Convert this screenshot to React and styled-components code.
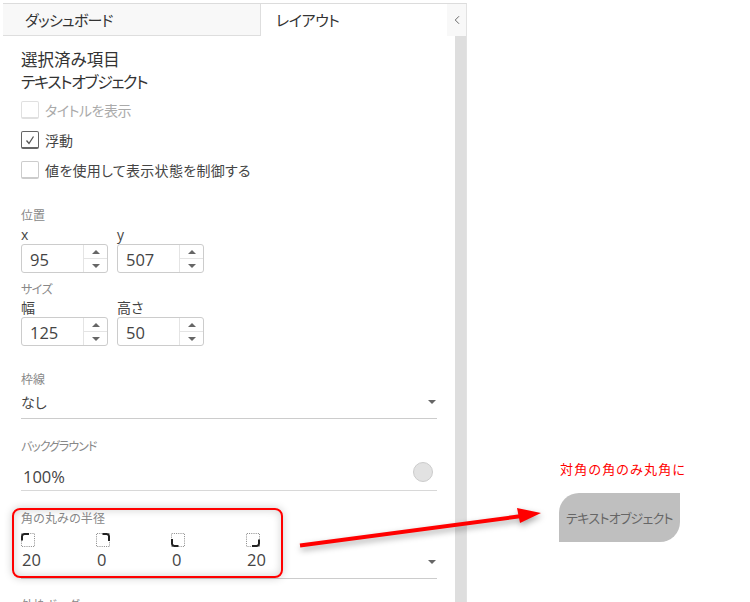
import React from 'react';
import styled, {createGlobalStyle} from 'styled-components';
import {ChevronLeft} from 'lucide-react';

const GlobalStyle = createGlobalStyle`
  html, body {
    margin: 0;
    padding: 0;
    background: #fff;
  }

  body {
    font-family: "Open Sans", "Noto Sans CJK JP", sans-serif;
    font-feature-settings: "palt";
    color: #404040;
  }
`;

const CORNERS = [
    {turn: 0, value: 20},
    {turn: 90, value: 0},
    {turn: 270, value: 0},
    {turn: 180, value: 20},
];

const CheckMark = () => (
    <svg width="12" height="12" viewBox="0 0 12 12">
        <path d="M2.5 6.5 L5 9.5 L9.5 2.5" fill="none" stroke="#555" strokeWidth="1.3"/>
    </svg>
)

const CornerIcon = ({turn}) => (
    <CornerSvg $turn={turn} viewBox="0 0 14 14">
        <rect x="0.5" y="0.5" width="13" height="13" fill="none" stroke="#888" strokeDasharray="1 1.2"/>
        <path d="M1 7.5V3.5a2.5 2.5 0 0 1 2.5-2.5H8" fill="none" stroke="#222" strokeWidth="2"/>
    </CornerSvg>
)

const Spinner = ({label, value}) => (
    <SpinnerField>
        <SpinnerLabel>{label}</SpinnerLabel>
        <SpinnerBox>
            <SpinnerValue>{value}</SpinnerValue>
            <SpinnerButtons>
                <SpinnerButton><Caret $up/></SpinnerButton>
                <SpinnerButton><Caret/></SpinnerButton>
            </SpinnerButtons>
        </SpinnerBox>
    </SpinnerField>
)

const App = () => {
    return (
        <Page>
            <GlobalStyle/>
            <Panel>
                <Tabs>
                    <Tab>ダッシュボード</Tab>
                    <Tab $active>レイアウト</Tab>
                    <Collapse><ChevronLeft size={14} strokeWidth={1.5}/></Collapse>
                </Tabs>
                <Body>
                    <Form>
                        <Title>選択済み項目</Title>
                        <Title $kana>テキストオブジェクト</Title>
                        <CheckList>
                            <CheckRow $disabled $spacing={-0.5}>
                                <CheckBox $disabled/>
                                タイトルを表示
                            </CheckRow>
                            <CheckRow>
                                <CheckBox $checked><CheckMark/></CheckBox>
                                浮動
                            </CheckRow>
                            <CheckRow $spacing={0.3}>
                                <CheckBox/>
                                値を使用して表示状態を制御する
                            </CheckRow>
                        </CheckList>

                        <FieldLabel $top={23}>位置</FieldLabel>
                        <SpinnerRow>
                            <Spinner label="x" value="95"/>
                            <Spinner label="y" value="507"/>
                        </SpinnerRow>
                        <FieldLabel $top={9} $spacing={-0.5}>サイズ</FieldLabel>
                        <SpinnerRow $top={1}>
                            <Spinner label="幅" value="125"/>
                            <Spinner label="高さ" value="50"/>
                        </SpinnerRow>

                        <FieldLabel $top={26}>枠線</FieldLabel>
                        <SelectRow>
                            なし
                            <Caret/>
                        </SelectRow>

                        <FieldLabel $top={20} $spacing={-1}>バックグラウンド</FieldLabel>
                        <OpacityRow>
                            <OpacityValue>100%</OpacityValue>
                            <Swatch/>
                        </OpacityRow>

                        <FieldLabel $top={20} $spacing={0.2}>角の丸みの半径</FieldLabel>
                        <RadiusRow>
                            {CORNERS.map((corner) => (
                                <RadiusColumn key={corner.turn}>
                                    <CornerIcon turn={corner.turn}/>
                                    <RadiusValue>{corner.value}</RadiusValue>
                                </RadiusColumn>
                            ))}
                            <RadiusCaret><Caret/></RadiusCaret>
                        </RadiusRow>

                        <FieldLabel $top={19}>外枠ボーダー</FieldLabel>
                    </Form>
                    <Scrollbar/>
                </Body>
            </Panel>

            <Preview>
                <Note>対角の角のみ丸角に</Note>
                <TextObject>テキストオブジェクト</TextObject>
            </Preview>

            <Highlight/>
            <Arrow viewBox="0 0 750 602">
                <line x1="300" y1="545.5" x2="522" y2="516" stroke="#f00" strokeWidth="4"/>
                <polygon points="541,513 517,508 520,523" fill="#f00"/>
            </Arrow>
        </Page>
    )
}

const Page = styled.div`
  position: relative;
  display: flex;
  width: 750px;
  height: 602px;
  overflow: hidden;
`;

const Panel = styled.div`
  display: flex;
  flex-direction: column;
  flex: none;
  width: 464px;
  height: 599px;
  margin: 3px 0 0 3px;
  border-top: 1px solid #dcdcdc;
  border-right: 1px solid #e2e2e2;
  box-sizing: border-box;
`;

const Tabs = styled.div`
  display: flex;
  flex: none;
  height: 32px;
`;

const Tab = styled.div`
  flex: none;
  width: ${({$active}) => ($active ? '186px' : '258px')};
  box-sizing: border-box;
  padding-left: ${({$active}) => ($active ? '15px' : '22px')};
  font-size: 15px;
  line-height: 32px;
  letter-spacing: ${({$active}) => ($active ? '-0.4px' : '-0.8px')};
  color: #333;
  background: ${({$active}) => ($active ? '#fff' : '#f8f8f8')};
  border-bottom: ${({$active}) => ($active ? 'none' : '1px solid #dedede')};
  border-right: ${({$active}) => ($active ? 'none' : '1px solid #dedede')};
`;

const Collapse = styled.div`
  display: flex;
  flex: 1;
  align-items: center;
  justify-content: center;
  color: #555;
  background: #f8f8f8;
`;

const Body = styled.div`
  display: flex;
  flex: 1;
  min-height: 0;
`;

const Form = styled.div`
  flex: 1;
  overflow: hidden;
  padding: 13px 18px 0;
`;

const Scrollbar = styled.div`
  flex: none;
  width: 11px;
  background: #dedede;
`;

const Title = styled.div`
  font-size: ${({$kana}) => ($kana ? '16px' : '16.5px')};
  line-height: 22px;
  letter-spacing: ${({$kana}) => ($kana ? '-1.4px' : '0')};
  color: #333;
`;

const CheckList = styled.div`
  margin-top: 2px;
`;

const CheckRow = styled.div`
  display: flex;
  align-items: center;
  gap: 6px;
  height: 30px;
  font-size: 14px;
  letter-spacing: ${({$spacing}) => $spacing || 0}px;
  color: ${({$disabled}) => ($disabled ? '#aaa' : '#444')};
`;

const CheckBox = styled.span`
  display: flex;
  align-items: center;
  justify-content: center;
  flex: none;
  width: 18px;
  height: 18px;
  box-sizing: border-box;
  border: 1px solid ${({$checked, $disabled}) => ($checked ? '#666' : $disabled ? '#e0e0e0' : '#ccc')};
  border-bottom-width: 2px;
  border-radius: 2px;
`;

const FieldLabel = styled.div`
  margin-top: ${({$top}) => $top}px;
  font-size: 12px;
  line-height: 16px;
  letter-spacing: ${({$spacing}) => $spacing || 0}px;
  color: #888;
`;

const SpinnerRow = styled.div`
  display: flex;
  gap: 9px;
  margin-top: ${({$top}) => $top || 2}px;
`;

const SpinnerField = styled.div`
  width: 87px;
`;

const SpinnerLabel = styled.div`
  font-size: 14px;
  line-height: 18px;
  color: #444;
`;

const SpinnerBox = styled.div`
  display: flex;
  height: 29px;
  box-sizing: border-box;
  border: 1px solid #ccc;
  border-radius: 3px;
`;

const SpinnerValue = styled.div`
  flex: 1;
  padding-left: 8px;
  font-size: 16.5px;
  line-height: 30px;
  color: #444;
`;

const SpinnerButtons = styled.div`
  display: flex;
  flex-direction: column;
  flex: none;
  width: 23px;
  border-left: 1px solid #e4e4e4;
`;

const SpinnerButton = styled.div`
  display: flex;
  flex: 1;
  align-items: center;
  justify-content: center;

  & + & {
    border-top: 1px solid #e4e4e4;
  }
`;

const Caret = styled.span`
  flex: none;
  width: 0;
  height: 0;
  border-left: 4px solid transparent;
  border-right: 4px solid transparent;
  border-${({$up}) => ($up ? 'bottom' : 'top')}: 4px solid #666;
`;

const SelectRow = styled.div`
  display: flex;
  align-items: center;
  justify-content: space-between;
  height: 30px;
  margin-top: 1px;
  padding: 0 1px 4px 0;
  box-sizing: border-box;
  font-size: 14px;
  color: #444;
  border-bottom: 1px solid #ccc;
`;

const OpacityRow = styled.div`
  display: flex;
  align-items: center;
  justify-content: space-between;
  height: 36px;
  padding: 0 4px 0 2px;
  box-sizing: border-box;
  border-bottom: 1px solid #d8d8d8;
`;

const OpacityValue = styled.span`
  margin-top: 8px;
  font-size: 16.5px;
  color: #444;
`;

const Swatch = styled.span`
  width: 20px;
  height: 20px;
  margin-top: -1px;
  box-sizing: border-box;
  background: #e2e2e2;
  border: 1px solid #ccc;
  border-radius: 50%;
`;

const RadiusRow = styled.div`
  display: flex;
  margin-top: 6px;
  padding-bottom: 8px;
  border-bottom: 1px solid #ccc;
`;

const RadiusColumn = styled.div`
  flex: none;
  width: 75px;
`;

const CornerSvg = styled.svg`
  display: block;
  width: 14px;
  height: 14px;
  transform: rotate(${({$turn}) => $turn}deg);
`;

const RadiusValue = styled.div`
  margin-top: 3px;
  padding-left: 1px;
  font-size: 16.5px;
  line-height: 20px;
  color: #444;
`;

const RadiusCaret = styled.div`
  display: flex;
  flex: 1;
  align-items: flex-end;
  justify-content: flex-end;
  padding: 0 1px 6px 0;
`;

const Preview = styled.div`
  flex: 1;
  padding: 460px 0 0 92px;
`;

const Note = styled.div`
  margin-left: 1px;
  font-size: 13px;
  line-height: 18px;
  letter-spacing: 1.2px;
  color: #f00;
`;

const TextObject = styled.div`
  display: flex;
  align-items: center;
  justify-content: center;
  width: 121px;
  height: 49px;
  margin-top: 15px;
  font-size: 13px;
  letter-spacing: -0.7px;
  color: #666;
  background: #bfbfbf;
  border-radius: 20px 0 20px 0;
`;

const Highlight = styled.div`
  position: absolute;
  left: 12px;
  top: 508px;
  width: 271px;
  height: 70px;
  box-sizing: border-box;
  border: 2px solid #f00;
  border-radius: 8px;
  box-shadow: 0 0 8px rgba(0, 0, 0, 0.2), inset 0 0 8px rgba(0, 0, 0, 0.18);
`;

const Arrow = styled.svg`
  position: absolute;
  left: 0;
  top: 0;
  width: 750px;
  height: 602px;
  pointer-events: none;
  filter: drop-shadow(1px 3px 3px rgba(0, 0, 0, 0.35));
`;

export default App;
